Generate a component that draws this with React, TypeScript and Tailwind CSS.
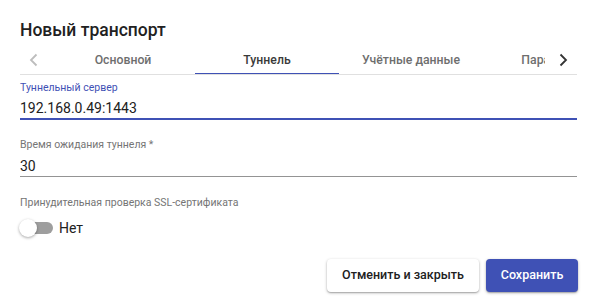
import React from "react";

const tabs = ["Основной", "Туннель", "Учётные данные", "Параметры"];

function Chevron({ dir, className }: { dir: "left" | "right"; className?: string }) {
  return (
    <svg width="10" height="14" viewBox="0 0 10 14" className={className} fill="none">
      {dir === "left" ? (
        <polyline points="7.5,1.5 2,7 7.5,12.5" stroke="currentColor" strokeWidth="1.8" />
      ) : (
        <polyline points="2.5,1.5 8,7 2.5,12.5" stroke="currentColor" strokeWidth="1.8" />
      )}
    </svg>
  );
}

export default function App() {
  const active = 1;

  return (
    <div className="w-[596px] h-[303px] bg-white px-5 font-['Roboto',sans-serif] text-[#212121] overflow-hidden">
      <h2 className="pt-[14px] text-[17.5px] font-medium leading-8">Новый транспорт</h2>

      <div className="flex h-[29px] w-[557px] border-b border-[#e0e0e0]">
        <div className="flex w-[31px] items-center justify-center text-[#bdbdbd]">
          <Chevron dir="left" className="-ml-1" />
        </div>
        <div className="flex flex-1 overflow-hidden">
          {tabs.map((tab, i) => (
            <div
              key={tab}
              className={`relative flex w-[144px] shrink-0 items-center justify-center text-[12.25px] font-medium ${
                i === active ? "text-[#3a3a3a]" : "text-[#6e6e6e]"
              }`}
            >
              {tab}
              {i === active && <span className="absolute -bottom-px left-0 h-[2px] w-full bg-[#3f51b5]" />}
            </div>
          ))}
        </div>
        <div className="flex w-8 items-center justify-center bg-white text-[#333]">
          <Chevron dir="right" className="ml-1" />
        </div>
      </div>

      <div className="mt-[6px] w-[557px]">
        <div className="text-[10.5px] leading-[14px] text-[#3f51b5]">Туннельный сервер</div>
        <div className="mt-1 h-[21px] border-b-2 border-[#3f51b5] text-[14px] leading-[19px]">192.168.0.49:1443</div>
      </div>

      <div className="mt-[18px] w-[557px]">
        <div className="text-[10.5px] leading-[14px] text-[#757575]">Время ожидания туннеля *</div>
        <div className="mt-1 h-[21px] border-b border-[#949494] text-[14px] leading-[20px]">30</div>
      </div>

      <div className="mt-[19px] text-[10.5px] leading-[14px] text-[#757575]">Принудительная проверка SSL-сертификата</div>

      <div className="mt-2 flex h-5 items-center">
        <div className="relative h-[18px] w-[33px]">
          <span className="absolute left-[1px] top-[3px] h-3 w-8 rounded-full bg-[#9e9e9e]" />
          <span className="absolute -left-[1px] top-0 size-[18px] rounded-full bg-white shadow-[0_1px_3px_rgba(0,0,0,0.35)]" />
        </div>
        <span className="ml-[6px] text-[14px]">Нет</span>
      </div>

      <div className="mt-[21px] -mr-[2px] flex justify-end gap-[7px]">
        <button className="h-[33px] w-[152px] rounded bg-white text-[12.5px] font-medium text-[#212121] shadow-[0_1px_3px_rgba(0,0,0,0.3),0_1px_1px_rgba(0,0,0,0.14)]">
          Отменить и закрыть
        </button>
        <button className="h-[33px] w-[92px] rounded bg-[#3f51b5] text-[12.5px] font-medium text-white shadow-[0_1px_3px_rgba(0,0,0,0.3),0_1px_1px_rgba(0,0,0,0.14)]">
          Сохранить
        </button>
      </div>
    </div>
  );
}
